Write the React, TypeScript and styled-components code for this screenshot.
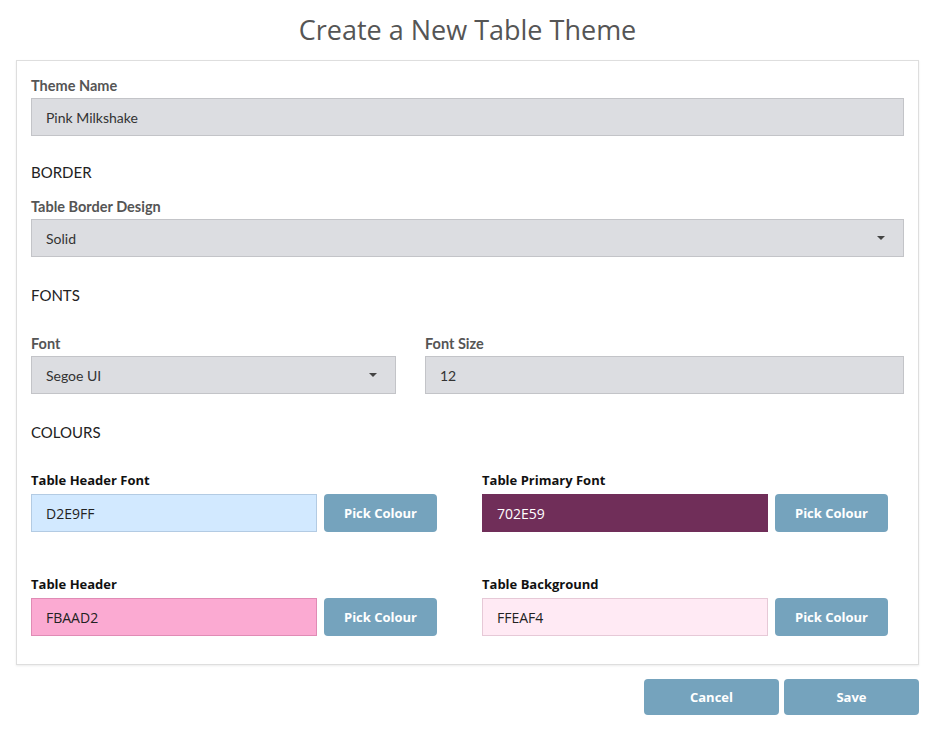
import styled, { createGlobalStyle } from "styled-components";

const GlobalStyle = createGlobalStyle`
  html, body {
    margin: 0;
    padding: 0;
    background: #ffffff;
  }
  * {
    box-sizing: border-box;
  }
`;

const Page = styled.div`
  width: 936px;
  padding: 0 17px 0 16px;
  font-family: Lato, "Open Sans", sans-serif;
`;

const Title = styled.h1`
  margin: 0;
  height: 60px;
  display: flex;
  align-items: center;
  justify-content: center;
  font-family: "Open Sans", "Noto Sans", sans-serif;
  font-weight: 400;
  font-size: 27px;
  color: #555555;
  padding-bottom: 2px;
`;

const Card = styled.div`
  border: 1px solid #dedede;
  box-shadow: 0 1px 2px rgba(0, 0, 0, 0.08);
  padding: 16px 14px 28px 14px;
  display: flex;
  flex-direction: column;
`;

const Field = styled.div`
  display: flex;
  flex-direction: column;
`;

const Label = styled.label`
  font-family: Lato, sans-serif;
  font-weight: 700;
  font-size: 14.5px;
  color: #555555;
  height: 21px;
  line-height: 17px;
`;

const Input = styled.div`
  height: 38px;
  background: #dcdde1;
  border: 1px solid #c3c4c8;
  display: flex;
  align-items: center;
  justify-content: space-between;
  padding: 0 18px 0 14px;
  font-family: Lato, sans-serif;
  font-size: 14px;
  color: #333333;
`;

const Caret = styled.span`
  width: 0;
  height: 0;
  border-left: 4px solid transparent;
  border-right: 4px solid transparent;
  border-top: 4px solid #444;
`;

const Section = styled.h2<{ $above: number; $below: number }>`
  margin: 0;
  font-family: Lato, sans-serif;
  font-weight: 400;
  font-size: 15px;
  color: #222222;
  padding-top: ${(p) => p.$above}px;
  margin-bottom: ${(p) => p.$below}px;
  line-height: 16px;
`;

const FontRow = styled.div`
  display: grid;
  grid-template-columns: 365px 1fr;
  gap: 29px;
`;

const ColourGrid = styled.div`
  display: grid;
  grid-template-columns: 451px 1fr;
  row-gap: 44px;
`;

const ColourLabel = styled.label`
  font-family: "Open Sans", "Noto Sans", sans-serif;
  font-weight: 700;
  font-size: 13px;
  color: #111111;
  height: 22px;
  line-height: 16px;
`;

const ColourRow = styled.div`
  display: flex;
  gap: 7px;
`;

const Swatch = styled.div<{ $bg: string; $border: string; $fg: string }>`
  width: 286px;
  height: 38px;
  background: ${(p) => p.$bg};
  border: 1px solid ${(p) => p.$border};
  color: ${(p) => p.$fg};
  display: flex;
  align-items: center;
  padding-left: 14px;
  font-family: "Open Sans", "Noto Sans", sans-serif;
  font-size: 14px;
`;

const Button = styled.button<{ $width: number }>`
  width: ${(p) => p.$width}px;
  height: 38px;
  border: none;
  border-radius: 4px;
  background: #75a3bd;
  color: #ffffff;
  font-family: "Open Sans", "Noto Sans", sans-serif;
  font-weight: 700;
  font-size: 13px;
  cursor: pointer;
`;

const Footer = styled.div`
  display: flex;
  justify-content: flex-end;
  gap: 5px;
  padding-top: 14px;
`;

const FooterButton = styled(Button)`
  height: 36px;
`;

const colours = [
  { label: "Table Header Font", value: "D2E9FF", bg: "#d2e9ff", border: "#b3cbe3", fg: "#222" },
  { label: "Table Primary Font", value: "702E59", bg: "#702e59", border: "#702e59", fg: "#ffffff" },
  { label: "Table Header", value: "FBAAD2", bg: "#fbaad2", border: "#e08bb5", fg: "#222" },
  { label: "Table Background", value: "FFEAF4", bg: "#ffeaf4", border: "#e6c9d7", fg: "#222" },
];

export default function App() {
  return (
    <Page>
      <GlobalStyle />
      <Title>Create a New Table Theme</Title>
      <Card>
        <Field>
          <Label>Theme Name</Label>
          <Input>Pink Milkshake</Input>
        </Field>

        <Section $above={28} $below={18}>BORDER</Section>
        <Field>
          <Label>Table Border Design</Label>
          <Input>
            Solid
            <Caret />
          </Input>
        </Field>

        <Section $above={30} $below={32}>FONTS</Section>
        <FontRow>
          <Field>
            <Label>Font</Label>
            <Input>
              Segoe UI
              <Caret />
            </Input>
          </Field>
          <Field>
            <Label>Font Size</Label>
            <Input>12</Input>
          </Field>
        </FontRow>

        <Section $above={30} $below={32}>COLOURS</Section>
        <ColourGrid>
          {colours.map((c) => (
            <Field key={c.label}>
              <ColourLabel>{c.label}</ColourLabel>
              <ColourRow>
                <Swatch $bg={c.bg} $border={c.border} $fg={c.fg}>
                  {c.value}
                </Swatch>
                <Button $width={113}>Pick Colour</Button>
              </ColourRow>
            </Field>
          ))}
        </ColourGrid>
      </Card>
      <Footer>
        <FooterButton $width={135}>Cancel</FooterButton>
        <FooterButton $width={135}>Save</FooterButton>
      </Footer>
    </Page>
  );
}
